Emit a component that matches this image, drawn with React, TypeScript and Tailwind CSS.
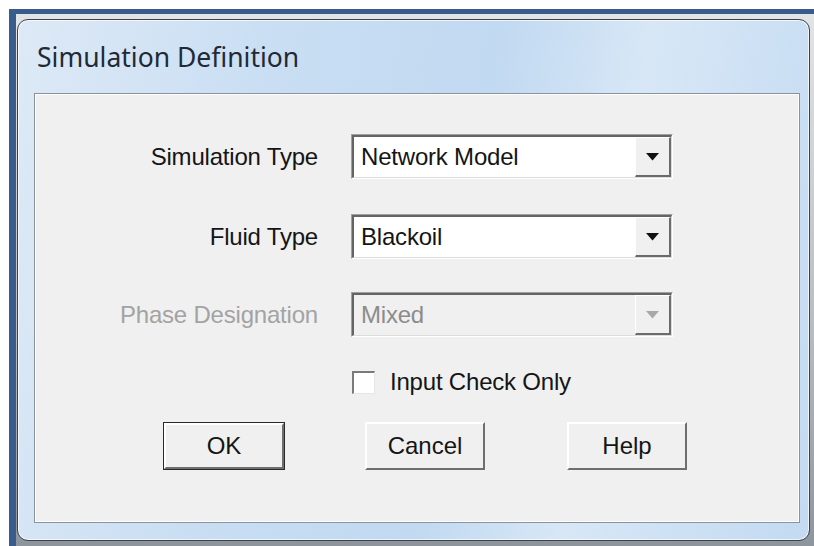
import React from "react";

const ui = { fontFamily: '"Liberation Sans", Arial, sans-serif' };
const titleFont = { fontFamily: '"Noto Sans", "Open Sans", sans-serif' };

function Arrow({ disabled }: { disabled?: boolean }) {
  return (
    <svg width="13" height="8" viewBox="0 0 13 8">
      <path d="M0 0 H13 L6.5 7.5 Z" fill={disabled ? "#a8a8a8" : "#111"} />
    </svg>
  );
}

function Combo({ value, disabled }: { value: string; disabled?: boolean }) {
  return (
    <div className="w-[322px] h-[45px] flex border-t border-l border-t-[#a0a0a0] border-l-[#a0a0a0] border-r border-b border-r-white border-b-white">
      <div className="flex-1 flex border-t-2 border-l-2 border-t-[#646464] border-l-[#646464] border-r border-b border-r-[#dcdcdc] border-b-[#dcdcdc]">
        <div
          className={
            "flex-1 flex items-center pl-[7px] text-[24px] tracking-[-0.2px] " +
            (disabled ? "bg-[#f0f0f0] text-[#8c8c8c]" : "bg-white text-[#151515]")
          }
        >
          {value}
        </div>
        <div className="w-[36px] flex items-center justify-center bg-[#f0f0f0] border-t border-l border-t-white border-l-white border-r-2 border-b-2 border-r-[#6b6b6b] border-b-[#6b6b6b]">
          <Arrow disabled={disabled} />
        </div>
      </div>
    </div>
  );
}

function Row({ label, value, disabled }: { label: string; value: string; disabled?: boolean }) {
  return (
    <div className="flex items-center">
      <div
        className={
          "w-[283px] text-right text-[24px] tracking-[-0.2px] " +
          (disabled ? "text-[#a3a3a3]" : "text-[#151515]")
        }
      >
        {label}
      </div>
      <div className="ml-[33px]">
        <Combo value={value} disabled={disabled} />
      </div>
    </div>
  );
}

function Button({ label, isDefault, width }: { label: string; isDefault?: boolean; width: string }) {
  return (
    <div className={width + " h-[48px] " + (isDefault ? "border border-[#2a2a2a]" : "")}>
      <div className="w-full h-full flex items-center justify-center bg-[#f0f0f0] border-t-2 border-l-2 border-t-white border-l-white border-r-2 border-b-2 border-r-[#6e6e6e] border-b-[#6e6e6e] text-[24px] text-[#151515]">
        {label}
      </div>
    </div>
  );
}

export default function App() {
  return (
    <div className="w-[814px] h-[546px] bg-white overflow-hidden" style={ui}>
      {/* desktop selection frame */}
      <div className="ml-[9px] mt-[9px] w-[805px] h-[537px] bg-[#3a5c8c] pt-[5px] pl-[7px]">
        <div className="w-[798px] h-[532px] bg-[linear-gradient(180deg,#e2e4e6_0%,#b7bcc2_60%,#8d949c_100%)] pt-[5px] pl-[1px]">
          {/* dialog window */}
          <div className="w-[793px] h-[522px] rounded-[11px] border border-[#3c4249] bg-[linear-gradient(100deg,#dde9f6_0%,#c9def3_30%,#c1d9f1_55%,#d7e7f6_72%,#c3daf2_100%)] shadow-[inset_0_0_0_1px_rgba(255,255,255,0.7)] flex flex-col">
            <div className="h-[73px] flex items-center pl-[19px] pt-[3px]">
              <span className="text-[26.5px] text-[#1f2a36]" style={titleFont}>
                Simulation Definition
              </span>
            </div>
            <div className="ml-[16px] w-[766px] h-[430px] border border-[#8a929b] bg-[#f0f0f0] shadow-[inset_0_0_0_1px_#ffffff] flex flex-col">
              <div className="mt-[40px]">
                <Row label="Simulation Type" value="Network Model" />
              </div>
              <div className="mt-[35px]">
                <Row label="Fluid Type" value="Blackoil" />
              </div>
              <div className="mt-[33px]">
                <Row label="Phase Designation" value="Mixed" disabled />
              </div>
              <div className="mt-[27px] ml-[317px] flex items-center">
                <div className="w-[23px] h-[23px] bg-white border-t-2 border-l-2 border-t-[#7a7a7a] border-l-[#7a7a7a] border-r border-b border-r-[#e6e6e6] border-b-[#e6e6e6]" />
                <span className="ml-[15px] text-[24px] text-[#151515] tracking-[-0.2px]">Input Check Only</span>
              </div>
              <div className="mt-[22px] ml-[128px] flex">
                <Button label="OK" isDefault width="w-[122px]" />
                <div className="ml-[80px]">
                  <Button label="Cancel" width="w-[120px]" />
                </div>
                <div className="ml-[82px]">
                  <Button label="Help" width="w-[120px]" />
                </div>
              </div>
            </div>
          </div>
        </div>
      </div>
    </div>
  );
}
